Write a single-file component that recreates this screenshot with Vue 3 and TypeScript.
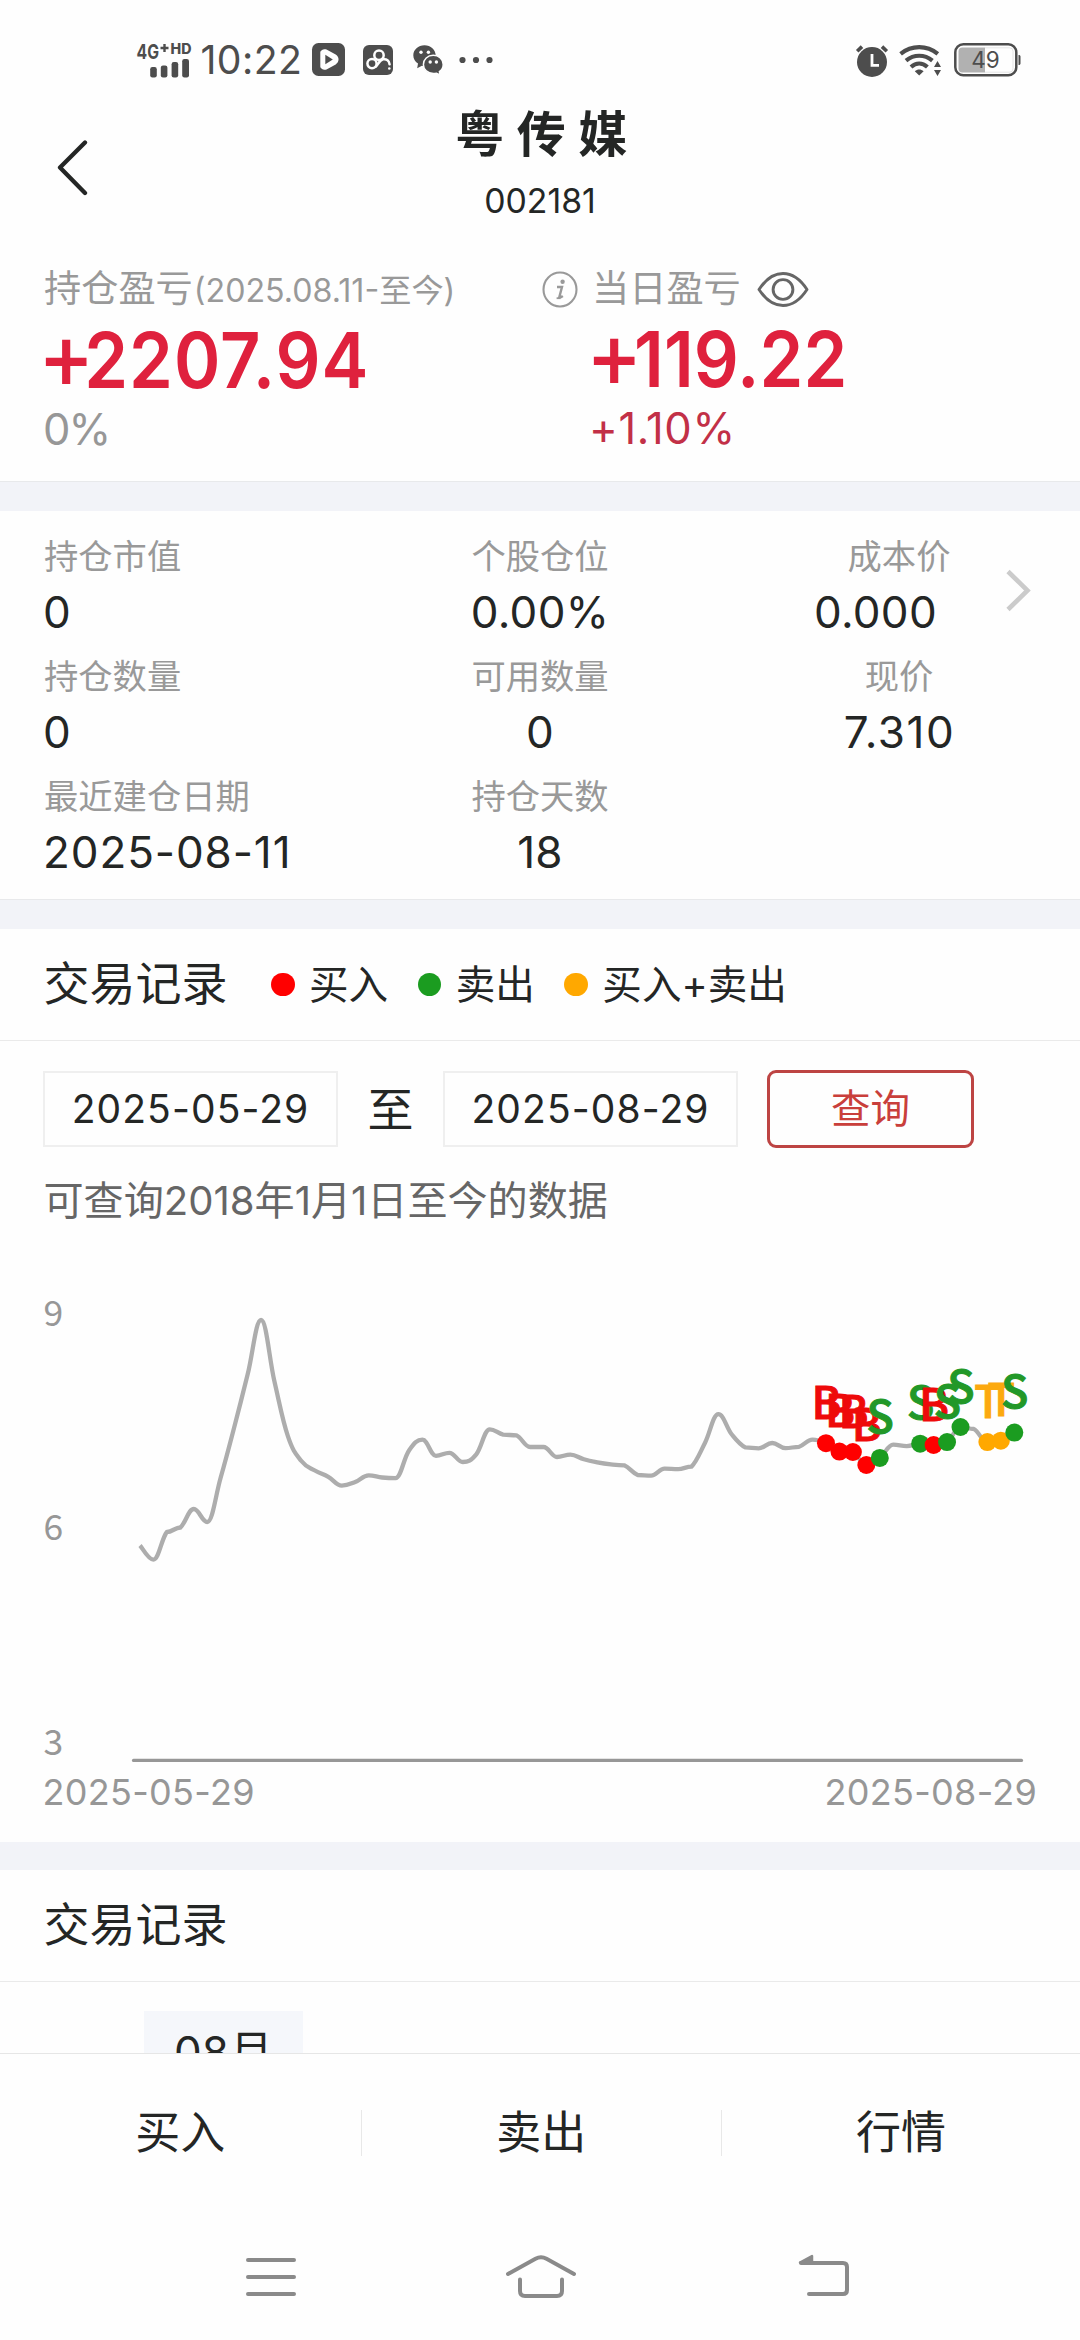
<script setup lang="ts">
type Side = 'buy' | 'sell' | 'both'

interface Metric {
  label: string
  value: string
  cls?: string
}

interface Point {
  x: number
  y: number
}

interface Marker extends Point {
  side: Side
}

const metrics: Metric[][] = [
  [
    { label: '持仓市值', value: '0' },
    { label: '个股仓位', value: '0.00%' },
    { label: '成本价', value: '0.000', cls: 'cost' },
  ],
  [
    { label: '持仓数量', value: '0' },
    { label: '可用数量', value: '0' },
    { label: '现价', value: '7.310', cls: 'price' },
  ],
  [
    { label: '最近建仓日期', value: '2025-08-11', cls: 'date' },
    { label: '持仓天数', value: '18' },
  ],
]

const legend: { side: Side; text: string }[] = [
  { side: 'buy', text: '买入' },
  { side: 'sell', text: '卖出' },
  { side: 'both', text: '买入+卖出' },
]

const colors: Record<Side, string> = { buy: '#ff0000', sell: '#1b9c20', both: '#ffa800' }
const inks: Record<Side, string> = { buy: '#ee0a0a', sell: '#229828', both: '#fca90f' }
const letters: Record<Side, string> = { buy: 'B', sell: 'S', both: 'T' }

const axis = [
  { text: '9', y: 45.5 },
  { text: '6', y: 259.8 },
  { text: '3', y: 474.8 },
]

// Daily closes, one per trading day, as heights below the top of the plot.
const closes = [
  265.4, 279.6, 252, 247.5, 229, 242, 197.5, 147.5, 94.6, 40, 101.8, 156.4, 181, 190.5, 196.8,
  205.6, 202, 195.4, 197.5, 198.2, 170.4, 159.6, 175.8, 172.8, 182, 174.3, 149.3, 154.6, 155.4,
  167, 167, 177, 174.6, 179.3, 182.3, 184.3, 185.3, 195, 195.7, 188.6, 189.2, 186.6, 163,
  134.2, 154.5, 167.4, 168.3, 163, 168.2, 166.8, 159.6, 163.2, 171.6, 172, 185, 177.9, 164.7,
  166.1, 163.7, 165, 162.1, 147, 149, 162.1, 160.7, 152.6,
]
const startX = 140
const step = (1014.3 - startX) / (closes.length - 1)
const points: Point[] = closes.map((y, i) => ({ x: startX + i * step, y }))

// Bezier smoothing that stays flat at local peaks and never overshoots a segment.
function smoothPath(pts: Point[]): string {
  const tension = 0.2
  const last = pts.length - 1
  const isExtreme = (i: number) =>
    i > 0 && i < last && (pts[i].y - pts[i - 1].y) * (pts[i + 1].y - pts[i].y) <= 0
  let d = `M${pts[0].x},${pts[0].y}`
  for (let i = 0; i < last; i++) {
    const a = pts[i]
    const b = pts[i + 1]
    const before = pts[Math.max(i - 1, 0)]
    const after = pts[Math.min(i + 2, last)]
    const lo = Math.min(a.y, b.y)
    const hi = Math.max(a.y, b.y)
    let y1 = a.y + (b.y - before.y) * tension
    let y2 = b.y - (after.y - a.y) * tension
    if (isExtreme(i) || y1 <= lo || y1 >= hi) y1 = a.y
    if (isExtreme(i + 1) || y2 <= lo || y2 >= hi) y2 = b.y
    const x1 = a.x + (b.x - before.x) * tension
    const x2 = b.x - (after.x - a.x) * tension
    d += `C${x1.toFixed(2)},${y1.toFixed(2)} ${x2.toFixed(2)},${y2.toFixed(2)} ${b.x.toFixed(2)},${b.y}`
  }
  return d
}

const line = smoothPath(points)

// Trading days counted back from the last close.
const trades: [number, Side][] = [
  [14, 'buy'], [13, 'buy'], [12, 'buy'], [11, 'buy'], [10, 'sell'],
  [7, 'sell'], [6, 'buy'], [5, 'sell'], [4, 'sell'],
  [2, 'both'], [1, 'both'], [0, 'sell'],
]
const markers: Marker[] = trades.map(([back, side]) => ({
  ...points[points.length - 1 - back],
  side,
}))

const actions = ['买入', '卖出', '行情']
</script>

<template>
  <div class="screen">
    <div class="status">
      <svg class="signal" width="56" height="36" viewBox="0 0 56 36">
        <text x="0.5" y="16.5" font-size="20" font-weight="700" textLength="22.500" lengthAdjust="spacingAndGlyphs">4G</text>
        <path d="M24.5 6h8M28.5 2v8" stroke="#4d4d4d" stroke-width="2.4" />
        <text x="34.5" y="12" font-size="14" font-weight="800" textLength="21" lengthAdjust="spacingAndGlyphs">HD</text>
        <rect x="14.2" y="25" width="6.6" height="10.5" rx="2.2" />
        <rect x="24.8" y="23.5" width="6.6" height="12" rx="2.2" />
        <rect x="35.6" y="20" width="6.6" height="15.5" rx="2.2" />
        <rect x="46.2" y="17" width="6.8" height="18.5" rx="2.2" />
      </svg>
      <span class="time">10:22</span>
      <svg class="s-play" width="33" height="33" viewBox="0 0 33 33">
        <rect width="33" height="33" rx="6.5" />
        <path d="M8.3 9.5c0-2.2 4-4 6.2-2.9l9.2 5c3.8 2.2 3.8 7.6 0 9.8l-9.2 5c-2.2 1.1-6.2-.7-6.2-2.9z" fill="#fefefe" />
        <path d="M13.3 11.8l7.5 4.7-7.5 4.7z" />
      </svg>
      <svg class="s-pan" width="30" height="30" viewBox="0 0 30 30">
        <rect width="30" height="30" rx="6" />
        <g fill="none" stroke="#fefefe" stroke-width="2.5" stroke-linecap="round">
          <circle cx="16" cy="10.3" r="4.7" />
          <circle cx="9" cy="18.6" r="4.6" />
          <path d="M13 21.5c2-1.6 3.4-6.4 7-7.2 3.6-.7 6.3 1.4 6.6 5" />
        </g>
        <circle cx="26.3" cy="23.5" r="1.3" fill="#fefefe" />
      </svg>
      <svg class="s-chat" width="31" height="30" viewBox="0 0 31 30">
        <path d="M11.5.3C5.2.3.3 4.8.3 10.3c0 3.5 1.8 6.4 4.7 8.3l-.8 4.7 4.7-2.6c1 .2 1.9.3 2.9.3 6-.3 10.9-4.7 10.9-10.5C22.7 4.800 17.700.3 11.500.3z" />
        <path d="M20.3 10.3c-5.700 0-9.900 4-9.900 9.100s4.200 9.200 9.900 9.200c1.200 0 2.200-.1 3.200-.4l3.600 1.700-.7-3.300c2.400-1.700 3.800-4.200 3.800-7.200 0-5.100-4.300-9.100-9.900-9.100z" stroke="#fefefe" stroke-width="1.5" />
        <g fill="#fefefe">
          <circle cx="8" cy="7.2" r="1.7" />
          <circle cx="15.4" cy="7.2" r="1.7" />
          <circle cx="17.2" cy="17" r="1.7" />
          <circle cx="23.4" cy="17" r="1.7" />
        </g>
      </svg>
      <svg class="s-more" width="34" height="8" viewBox="0 0 34 8">
        <circle cx="3.5" cy="4" r="3.1" /><circle cx="17" cy="4" r="3.1" /><circle cx="30.5" cy="4" r="3.1" />
      </svg>
      <svg class="s-alarm" width="32" height="32" viewBox="0 0 32 32">
        <circle cx="16" cy="17" r="15" />
        <path d="M1.2 6.2L6 1.6M30.8 6.2L26 1.6" stroke="#4d4d4d" stroke-width="3.6" />
        <path d="M16 9v11.300h7" fill="none" stroke="#fefefe" stroke-width="2.8" />
      </svg>
      <svg class="s-wifi" width="42" height="31" viewBox="0 0 42 31">
        <g fill="none" stroke="#4d4d4d" stroke-width="4.2">
          <path d="M1.6 8.8C12.7-.1 27.7-.1 38.8 8.8" />
          <path d="M7 15.700c8-6.600 18.400-6.600 26.400 0" />
          <path d="M12 22c5-4.400 11.400-4.400 16.400 0" />
        </g>
        <path d="M15.800 26.300c2.800-2.400 6-2.400 8.800 0L20.200 30.600z" />
        <path d="M35 22l3.500-6 3.500 6zM35 25l3.500 6 3.500-6z" />
      </svg>
      <svg class="s-bat" width="68" height="34" viewBox="0 0 68 34">
        <rect x="1.3" y="1.3" width="61" height="31" rx="8" fill="none" stroke="#4d4d4d" stroke-width="2.5" />
        <path d="M8.500 4.500H31v25H8.500a4 4 0 0 1-4-4v-17a4 4 0 0 1 4-4z" fill="#b1b1b1" />
        <path d="M31 4.800h24.500a3.500 3.500 0 0 1 3.500 3.500v17.400a3.500 3.500 0 0 1-3.500 3.500H31" fill="none" stroke="#dedede" stroke-width=".8" />
        <path d="M64.500 12c1.500 0 2 .6 2 1.500v7c0 .9-.5 1.500-2 1.500z" />
        <text x="31.5" y="24.6" font-size="22.5" text-anchor="middle">49</text>
      </svg>
    </div>

    <header class="header">
      <svg class="back" width="32" height="56" viewBox="0 0 32 56">
        <path d="M28 2.500L3 27.500l25 25.500" fill="none" stroke="#242625" stroke-width="4.3" stroke-linecap="round" stroke-linejoin="round" />
      </svg>
      <div class="heading">
        <h1>粤传媒</h1>
        <div class="code">002181</div>
      </div>
    </header>

    <section class="profit">
      <div class="total">
        <div class="label">持仓盈亏<small>(2025.08.11-至今)</small></div>
        <div class="big"><span class="sign">+</span>2207.94</div>
        <div class="rate">0%</div>
      </div>
      <div class="today">
        <div class="label">
          <svg class="info" width="36" height="37" viewBox="0 0 36 37">
            <ellipse cx="18" cy="18.5" rx="16.5" ry="17" fill="none" stroke="#999" stroke-width="2.1" />
            <circle cx="20.6" cy="10.8" r="2.2" fill="#999" />
            <path d="M15 16h5l-2.800 10.500c1 .2 2.400-.5 3.600-1.500" fill="none" stroke="#999" stroke-width="2.4" />
            <path d="M14.600 27.200h4" stroke="#999" stroke-width="1.8" />
          </svg>
          <span>当日盈亏</span>
          <svg class="eye" width="52" height="37" viewBox="0 0 52 37">
            <g fill="none" stroke="#666" stroke-width="2.9" stroke-linejoin="round">
              <path d="M2 18.500C8.500 8.500 16 2.500 26 2.500s17.500 6 24 16c-6.500 10-14 16-24 16s-17.500-6-24-16z" />
              <circle cx="26" cy="18.5" r="9.9" />
            </g>
          </svg>
        </div>
        <div class="big"><span class="sign">+</span>119.22</div>
        <div class="rate up">+1.10%</div>
      </div>
    </section>

    <div class="band lined"></div>

    <section class="metrics">
      <template v-for="(row, r) in metrics" :key="r">
        <div v-for="(m, c) in row" :key="m.label" :class="['cell', `c${c}`, `r${r}`]">
          <div class="m-label">{{ m.label }}</div>
          <div :class="['m-value', m.cls]">{{ m.value }}</div>
        </div>
      </template>
      <svg class="chev" width="25" height="43" viewBox="0 0 25 43">
        <path d="M2 2.500l19.500 19L2 40.500" fill="none" stroke="#cbcbcb" stroke-width="4.6" />
      </svg>
    </section>

    <div class="band lined"></div>

    <div class="title-row">
      <h2>交易记录</h2>
      <div class="legend">
        <div v-for="l in legend" :key="l.side" class="legend-item">
          <i :class="['dot', l.side]"></i><span>{{ l.text }}</span>
        </div>
      </div>
    </div>

    <div class="query">
      <div class="date-box">2025-05-29</div>
      <span class="to">至</span>
      <div class="date-box">2025-08-29</div>
      <button type="button" class="search">查询</button>
    </div>
    <p class="hint">可查询2018年1月1日至今的数据</p>

    <svg class="chart" width="1080" height="618" viewBox="0 -56 1080 618">
      <text v-for="a in axis" :key="a.text" class="axis-y" x="43.5" :y="a.y">{{ a.text }}</text>
      <path d="M133.500 480.400H1021.500" stroke="#979797" stroke-width="3.2" stroke-linecap="round" />
      <path :d="line" fill="none" stroke="#adadad" stroke-width="4.3" stroke-linejoin="round" />
      <circle v-for="(m, i) in markers" :key="'d' + i" :cx="m.x" :cy="m.y" r="9" :fill="colors[m.side]" />
      <text v-for="(m, i) in markers" :key="'t' + i" class="mark" :x="m.x + 0.5" :y="m.y - 24.5" :fill="inks[m.side]" :stroke="inks[m.side]">{{ letters[m.side] }}</text>
      <text class="axis-x" x="42.5" y="525">2025-05-29</text>
      <text class="axis-x" x="824.5" y="525">2025-08-29</text>
    </svg>

    <div class="band short"></div>

    <div class="title-row"><h2>交易记录</h2></div>

    <div class="records">
      <div class="month">08月</div>
    </div>

    <footer class="actions">
      <div v-for="a in actions" :key="a" class="action">{{ a }}</div>
    </footer>

    <nav class="nav">
      <svg width="60" height="50" viewBox="0 0 60 50">
        <path d="M7 8h46M7 25h46M7 42h46" />
      </svg>
      <svg width="80" height="50" viewBox="0 0 80 50">
        <path d="M7 22L34.500 6.800Q40 3.800 45.500 6.800L73 22" />
        <path d="M19 27.500v11.500q0 5 5 5h32q5 0 5-5v-11.500" />
      </svg>
      <svg width="60" height="50" viewBox="0 0 60 50">
        <path d="M9 11h42q4 0 4 4v23q0 4-4 4H17" />
        <path class="tip" d="M8 10.500L20 4v6.500z" />
      </svg>
    </nav>
  </div>
</template>

<style>
body {
  background: #fefefe;
}
</style>

<style scoped>
.screen {
  width: 1080px;
  height: 2340px;
  overflow: hidden;
  display: flex;
  flex-direction: column;
  background: #fefefe;
  color: #242625;
  font-family: Inter, 'Noto Sans CJK SC', sans-serif;
}
.screen > * {
  flex: none;
  box-sizing: border-box;
}
svg {
  display: block;
  flex: none;
}
h1,
h2,
p {
  margin: 0;
  font-weight: 400;
}

/* status bar */
.status {
  height: 88px;
  padding: 31px 0 0 136px;
  display: flex;
  align-items: center;
  color: #4d4d4d;
}
.status svg {
  fill: #4d4d4d;
  overflow: visible;
}
.time {
  width: 111px;
  margin-left: 8.5px;
  font-size: 39.2px;
  line-height: 50px;
  letter-spacing: 0.4px;
}
.s-play {
  margin-left: 0.5px;
}
.s-pan {
  margin-left: 18px;
}
.s-chat {
  margin-left: 20px;
}
.s-more {
  margin-left: 15px;
}
.s-alarm {
  margin-left: 363px;
  margin-top: 2px;
}
.s-wifi {
  margin-left: 11px;
  margin-top: 1px;
}
.s-bat {
  margin-left: 13px;
}

/* page header */
.header {
  height: 152px;
  display: grid;
  grid-template-columns: 140px 1fr 140px;
}
.back {
  margin: 52px 0 0 57px;
}
.heading {
  padding-top: 16.5px;
  text-align: center;
}
h1 {
  padding-left: 15px;
  font-size: 49px;
  line-height: 60px;
  font-weight: 700;
  letter-spacing: 12.5px;
}
.code {
  margin-top: 13px;
  font-size: 33.8px;
  line-height: 46px;
}

/* profit summary */
.profit {
  height: 241px;
  padding: 23.5px 0 0 44px;
  display: flex;
}
.total {
  width: 548px;
}
.label {
  height: 50px;
  display: flex;
  align-items: baseline;
  font-size: 37.2px;
  line-height: 50px;
  color: #999;
}
.label small {
  font-size: 32.2px;
  margin-left: 1px;
}
.today .label {
  align-items: center;
}
.info {
  margin: 1px 14px 0 -50px;
}
.eye {
  margin: 1px 0 0 16.5px;
}
.big {
  margin: 4.5px 0 0 -6px;
  font-size: 76.5px;
  line-height: 84px;
  font-weight: 600;
  letter-spacing: 1.1px;
  color: #df213d;
  white-space: nowrap;
  transform: scaleX(0.92);
  transform-origin: left;
}
.sign {
  margin-right: -11px;
  font-size: 1.2em;
  font-weight: 500;
  line-height: 1px;
  letter-spacing: 0;
}
.today .big {
  margin-top: 3.5px;
  letter-spacing: 0.1px;
}
.today .sign {
  margin-right: -9px;
}
.rate {
  margin: 2px 0 0 -1px;
  font-size: 43.5px;
  line-height: 50px;
  letter-spacing: -2px;
  color: #979797;
}
.rate.up {
  margin-left: -3px;
  letter-spacing: 0.6px;
  color: #c23047;
}

.band {
  height: 30px;
  background: #f2f3f8;
}
.band.lined {
  border-top: 1px solid #e8e9eb;
}
.band.short {
  height: 28px;
}

/* position metrics */
.metrics {
  height: 388px;
  padding: 23px 0 0 44px;
  display: grid;
  grid-template-columns: 316px 360px 80px 198px 1fr;
  grid-auto-rows: 105px;
  row-gap: 15px;
}
.cell {
  text-align: center;
  white-space: nowrap;
}
.r0 {
  grid-row: 1;
}
.r1 {
  grid-row: 2;
}
.r2 {
  grid-row: 3;
}
.c0 {
  grid-column: 1;
  text-align: left;
}
.c1 {
  grid-column: 2;
}
.c2 {
  grid-column: 4;
}
.m-label {
  font-size: 34.3px;
  line-height: 46px;
  color: #999;
}
.m-value {
  margin-top: 5px;
  font-size: 44px;
  line-height: 54px;
  letter-spacing: 0.3px;
}
.c0 .m-value {
  margin-left: -1px;
}
.m-value.cost {
  padding-right: 47px;
}
.m-value.price {
  padding-left: 1px;
  letter-spacing: 1.6px;
}
.m-value.date {
  letter-spacing: 0.9px;
}
.chev {
  grid-column: 5;
  grid-row: 1;
  align-self: center;
  margin: 8px 0 0 7.5px;
}

/* trade record heading and legend */
.title-row {
  height: 112px;
  padding-left: 43.5px;
  display: flex;
  align-items: center;
  border-bottom: 1px solid #eaeaea;
}
h2 {
  margin-bottom: 3px;
  font-size: 46px;
  line-height: 60px;
}
.legend {
  display: flex;
  gap: 29.5px;
  margin-left: 43.5px;
}
.legend-item {
  display: flex;
  align-items: center;
  gap: 14.5px;
  font-size: 39.6px;
  line-height: 60px;
}
.dot {
  width: 23.5px;
  height: 23.5px;
  border-radius: 50%;
}
.dot.buy {
  background: #ff0000;
}
.dot.sell {
  background: #1b9c20;
}
.dot.both {
  background: #ffa800;
}

/* date range */
.query {
  height: 107px;
  padding: 29px 0 0 43px;
  display: flex;
  align-items: center;
}
.date-box {
  box-sizing: border-box;
  width: 295px;
  height: 76px;
  border: 2px solid #efefef;
  font-size: 39px;
  line-height: 72px;
  letter-spacing: 1.1px;
  text-align: center;
}
.to {
  margin: 0 29.5px;
  font-size: 46px;
  line-height: 60px;
}
.search {
  box-sizing: border-box;
  width: 207px;
  height: 78px;
  margin-left: 29px;
  padding: 0;
  border: 3px solid #bd4443;
  border-radius: 9px;
  background: none;
  color: #c93f3b;
  font-family: inherit;
  font-size: 39.5px;
  line-height: 70px;
}
.hint {
  height: 76px;
  padding: 28px 0 0 43.5px;
  font-size: 40.1px;
  line-height: 50px;
  color: #666;
}

/* price chart */
.axis-y {
  font-family: 'Noto Sans CJK SC', sans-serif;
  font-size: 35.5px;
  fill: #979797;
}
.axis-x {
  font-size: 36px;
  letter-spacing: 0.3px;
  fill: #979797;
}
.mark {
  font-family: 'Noto Sans CJK SC', sans-serif;
  font-size: 45px;
  font-weight: 500;
  stroke-width: 1px;
  text-anchor: middle;
}

/* records list */
.records {
  height: 71px;
  padding: 29px 0 0 144px;
  overflow: hidden;
}
.month {
  width: 159px;
  height: 84px;
  background: #f5f7fb;
  font-size: 44px;
  line-height: 83px;
  text-align: center;
}

/* bottom actions */
.actions {
  height: 157px;
  padding-top: 2px;
  display: grid;
  grid-template-columns: 361.5px 360.5px 358px;
  align-items: center;
  border-top: 1px solid #e6e6e6;
}
.action {
  font-size: 45px;
  line-height: 46px;
  text-align: center;
}
.action:not(:last-child) {
  border-right: 1px solid #e8e8e8;
}

.nav {
  height: 130px;
  padding: 4px 0 0 136px;
  display: grid;
  grid-template-columns: 270px 270px 292px;
  align-items: center;
  justify-items: center;
}
.nav svg {
  fill: none;
  stroke: #8a8a8a;
  stroke-width: 4px;
  stroke-linecap: round;
  stroke-linejoin: round;
}
.nav .tip {
  fill: #8a8a8a;
  stroke-width: 2.5px;
}
</style>
